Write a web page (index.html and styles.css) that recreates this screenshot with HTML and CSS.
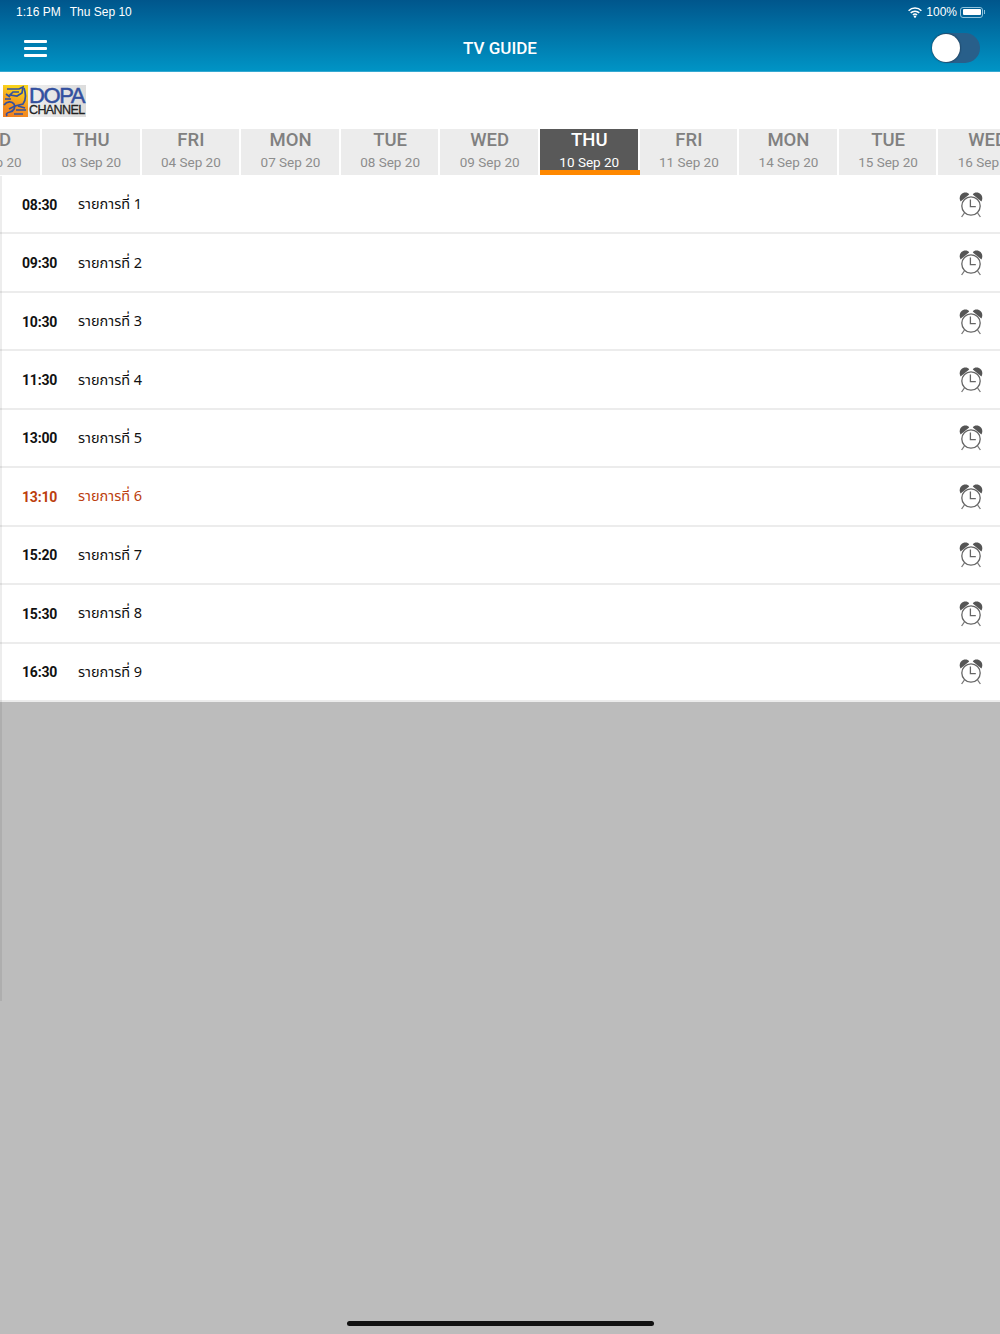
FILE: index.html
```html
<!DOCTYPE html>
<html lang="en">
<head>
    <meta charset="UTF-8">
    <meta name="viewport" content="width=device-width, initial-scale=1.0">
    <title>TV Guide</title>
    <link rel="stylesheet" href="styles.css">
</head>
<body>
    <header class="top">
        <div class="status">
            <div class="status_left"><span>1:16 PM</span><span>Thu Sep 10</span></div>
            <div class="status_right">
                <svg class="wifi" width="14" height="11" viewBox="0 0 14 11">
                    <path d="M.6 3.7a9.2 9.2 0 0 1 12.8 0M2.7 5.9a6.2 6.2 0 0 1 8.6 0M4.9 8a3.1 3.1 0 0 1 4.2 0" fill="none" stroke="#fff" stroke-width="1.5"/>
                    <circle cx="7" cy="9.6" r="1.2" fill="#fff"/>
                </svg>
                <span>100%</span>
                <div class="battery"><div class="battery_fill"></div></div>
                <div class="battery_tip"></div>
            </div>
        </div>
        <div class="nav">
            <div class="nav_side"><div class="burger"><i></i><i></i><i></i></div></div>
            <div class="nav_title">TV GUIDE</div>
            <div class="nav_side nav_right"><div class="toggle"><div class="knob"></div></div></div>
        </div>
    </header>

    <div class="brand">
        <div class="logo">
            <div class="logo_pic">
                <svg width="25" height="32" viewBox="0 0 25 32">
                    <g fill="none" stroke="#33509f" stroke-width="1.7">
                        <path d="M4 4h12l4-2-1 6-5 3-7-1 3-3h6"/>
                        <path d="M21 3c2 6 2 12-1 16l-8 2-6 3"/>
                        <path d="M1 20c3-4 8-4 10-1s0 7-4 8-4 2-3 4"/>
                        <path d="M13 25h10M15 21l7 2M11 29h9"/>
                        <path d="M3 9l4 3M2 14h6"/>
                    </g>
                </svg>
            </div>
            <div class="logo_text">
                <div class="logo_dopa">DOPA</div>
                <div class="logo_channel">CHANNEL</div>
            </div>
        </div>
    </div>

    <div class="days">
        <div class="day"><div class="day_name">WED</div><div class="day_date">02 Sep 20</div></div>
        <div class="day"><div class="day_name">THU</div><div class="day_date">03 Sep 20</div></div>
        <div class="day"><div class="day_name">FRI</div><div class="day_date">04 Sep 20</div></div>
        <div class="day"><div class="day_name">MON</div><div class="day_date">07 Sep 20</div></div>
        <div class="day"><div class="day_name">TUE</div><div class="day_date">08 Sep 20</div></div>
        <div class="day"><div class="day_name">WED</div><div class="day_date">09 Sep 20</div></div>
        <div class="day active"><div class="day_name">THU</div><div class="day_date">10 Sep 20</div></div>
        <div class="day"><div class="day_name">FRI</div><div class="day_date">11 Sep 20</div></div>
        <div class="day"><div class="day_name">MON</div><div class="day_date">14 Sep 20</div></div>
        <div class="day"><div class="day_name">TUE</div><div class="day_date">15 Sep 20</div></div>
        <div class="day"><div class="day_name">WED</div><div class="day_date">16 Sep 20</div></div>
    </div>

    <svg width="0" height="0" class="defs">
        <symbol id="alarm" viewBox="0 0 24 26">
            <path d="M1.6 9.6C-.8 5.2 2 .6 6.4.6c1.7 0 3 .6 3.8 1.8z" fill="#555"/>
            <path d="M22.4 9.6c2.4-4.4-.4-9-4.8-9-1.7 0-3 .6-3.8 1.8z" fill="#555"/>
            <circle cx="12" cy="14" r="9.2" fill="#fff" stroke="#666" stroke-width="1.3"/>
            <path d="M11.4 7.6v7h5.4" fill="none" stroke="#666" stroke-width="1.3"/>
            <path d="M5.4 21 2.6 25M18.6 21l2.8 4" fill="none" stroke="#777" stroke-width="1.3"/>
        </symbol>
    </svg>

    <div class="list">
        <div class="row"><div class="time">08:30</div><div class="prog">รายการที่ 1</div><svg class="clock"><use href="#alarm"/></svg></div>
        <div class="row"><div class="time">09:30</div><div class="prog">รายการที่ 2</div><svg class="clock"><use href="#alarm"/></svg></div>
        <div class="row"><div class="time">10:30</div><div class="prog">รายการที่ 3</div><svg class="clock"><use href="#alarm"/></svg></div>
        <div class="row"><div class="time">11:30</div><div class="prog">รายการที่ 4</div><svg class="clock"><use href="#alarm"/></svg></div>
        <div class="row"><div class="time">13:00</div><div class="prog">รายการที่ 5</div><svg class="clock"><use href="#alarm"/></svg></div>
        <div class="row now"><div class="time">13:10</div><div class="prog">รายการที่ 6</div><svg class="clock"><use href="#alarm"/></svg></div>
        <div class="row"><div class="time">15:20</div><div class="prog">รายการที่ 7</div><svg class="clock"><use href="#alarm"/></svg></div>
        <div class="row"><div class="time">15:30</div><div class="prog">รายการที่ 8</div><svg class="clock"><use href="#alarm"/></svg></div>
        <div class="row"><div class="time">16:30</div><div class="prog">รายการที่ 9</div><svg class="clock"><use href="#alarm"/></svg></div>
    </div>

    <div class="edge"></div>
    <div class="home_bar"></div>
</body>
</html>
```

FILE: styles.css
```css
html, body{
    margin: 0;
    height: 1334px;
    overflow: hidden;
}

body{
    position: relative;
    background: #bcbcbc;
    font-family: Roboto, "Noto Sans", sans-serif;
}

.top{
    height: 72px;
    background: linear-gradient(#00568c, #0095c6);
    color: #fff;
    box-shadow: inset 0 -1px 0 #35a9d2;
}

.status{
    display: flex;
    justify-content: space-between;
    height: 24px;
    line-height: 24px;
    padding: 0 15px 0 16px;
    font-family: "Liberation Sans", sans-serif;
    font-size: 12px;
}

.status_left{
    display: flex;
    gap: 9px;
}

.status_right{
    display: flex;
    align-items: center;
}

.wifi{
    margin-right: 4px;
}

.battery{
    width: 23px;
    height: 11px;
    margin-left: 3px;
    padding: 1.5px;
    box-sizing: border-box;
    border: 1px solid #8fc2dc;
    border-radius: 3px;
}

.battery_fill{
    height: 100%;
    background: #fff;
    border-radius: 1px;
}

.battery_tip{
    width: 1px;
    height: 4px;
    margin-left: 1px;
    background: #8fc2dc;
}

.nav{
    display: flex;
    align-items: center;
    height: 48px;
    padding: 0 20px;
}

.nav_side{
    flex: 1 1 0;
}

.nav_right{
    display: flex;
    justify-content: flex-end;
}

.burger{
    display: flex;
    flex-direction: column;
    gap: 4px;
    width: 23px;
    margin-left: 4px;
}

.burger i{
    height: 3px;
    background: #fff;
    border-radius: 1px;
}

.nav_title{
    font-size: 17px;
    font-weight: 500;
}

.toggle{
    width: 48px;
    height: 30px;
    border-radius: 15px;
    background: #285f8a;
}

.knob{
    width: 28px;
    height: 28px;
    margin-top: 1px;
    border-radius: 50%;
    background: #fff;
    box-shadow: 0 0 2px #123;
}

.brand{
    height: 57px;
    background: #fff;
    padding: 13px 0 0 3px;
    box-sizing: border-box;
}

.logo{
    display: flex;
    width: 83px;
    height: 32px;
    background: linear-gradient(90deg, #f6f6f6, #dcdcdc);
}

.logo_pic{
    width: 25px;
    height: 32px;
    background: linear-gradient(20deg, #ee7a22, #f59a1e 45%, #f9d21c 80%);
}

.logo_text{
    font-family: "Liberation Sans", sans-serif;
    margin-left: 1px;
}

.logo_dopa{
    height: 19px;
    line-height: 21px;
    font-size: 22px;
    letter-spacing: -1.4px;
    color: #33509f;
    -webkit-text-stroke: .5px #33509f;
}

.logo_channel{
    line-height: 13px;
    font-size: 12.5px;
    letter-spacing: -.6px;
    color: #222;
    -webkit-text-stroke: .3px #222;
}

.days{
    display: flex;
    gap: 2px;
    height: 46px;
    margin-left: -57.6px;
    background: #fff;
}

.day{
    flex: 0 0 97.6px;
    height: 46px;
    padding-left: 1px;
    box-sizing: border-box;
    background: #ececec;
    color: #808080;
    text-align: center;
}

.day_name{
    height: 22px;
    line-height: 22px;
    font-size: 18.5px;
    font-weight: 500;
}

.day_date{
    line-height: 22px;
    font-size: 13.5px;
    color: #8d8d8d;
}

.day.active{
    position: relative;
    background: #595959;
    color: #fff;
}

.day.active .day_date{
    color: #fff;
}

.day.active::after{
    content: "";
    position: absolute;
    left: 0;
    right: -2px;
    bottom: 0;
    height: 5px;
    background: #ff8800;
}

.defs{
    display: block;
}

.list{
    padding-top: 1px;
    background: #fff;
}

.row{
    display: flex;
    align-items: center;
    height: 58.45px;
    box-sizing: border-box;
    padding: 1px 17px 0 22px;
    border-bottom: 2px solid #ececec;
    font-size: 14px;
    color: #111;
}

.time{
    width: 56px;
    font-size: 14px;
    letter-spacing: -.2px;
    font-weight: 700;
}

.prog{
    flex: 1;
    font-size: 14.5px;
    font-family: "Noto Sans", "Noto Sans Thai", "Liberation Sans", sans-serif;
}

.row.now{
    color: #bc3e0e;
}

.clock{
    width: 24px;
    height: 26px;
}

.edge{
    position: absolute;
    left: 0;
    top: 176px;
    width: 2px;
    height: 825px;
    background: rgba(0, 0, 0, .07);
}

.home_bar{
    position: absolute;
    left: 347px;
    top: 1321px;
    width: 307px;
    height: 5px;
    border-radius: 3px;
    background: #111;
}
```
